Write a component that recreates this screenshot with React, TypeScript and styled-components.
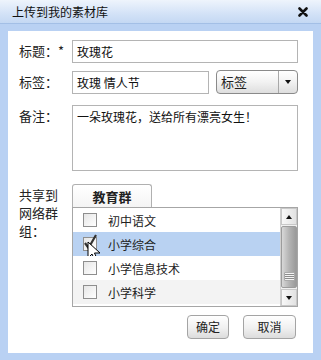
import { createGlobalStyle, styled } from 'styled-components';

const GlobalStyle = createGlobalStyle`
  html, body {
    margin: 0;
    padding: 0;
    background: #b9d1f3;
  }
  body {
    font-family: "Noto Sans CJK SC", "DejaVu Sans", sans-serif;
    color: #222;
  }
`;

const Dialog = styled.div`
  width: 321px;
  height: 360px;
  display: flex;
  flex-direction: column;
  background: #b9d1f3;
  box-sizing: border-box;
`;

const TitleBar = styled.div`
  height: 23px;
  flex: none;
  display: flex;
  align-items: center;
  justify-content: space-between;
  padding: 0 13px 0 12px;
  background: linear-gradient(#eef4fc, #d3e2f7 60%, #c4d8f3);
  border-bottom: 1px solid #a3bfe6;
  font-size: 12px;
  color: #111;
`;

const Panel = styled.div`
  flex: 1;
  margin: 7px 8px 7px 8px;
  background: #fff;
  padding: 9px 15px 0 11px;
  display: flex;
  flex-direction: column;
  position: relative;
`;

const Row = styled.div<{ $gap?: number }>`
  display: grid;
  grid-template-columns: 53px 1fr;
  margin-bottom: ${(p) => p.$gap ?? 8}px;
`;

const Label = styled.div`
  font-size: 13px;
  line-height: 18px;
  padding-top: 2px;
  color: #222;
`;

const Field = styled.div<{ $h?: number }>`
  height: ${(p) => p.$h ?? 23}px;
  box-sizing: border-box;
  border: 1px solid #b4b4b4;
  padding: 2px 4px;
  font-size: 12px;
  line-height: 17px;
  background: #fff;
  color: #111;
`;

const Inline = styled.div`
  display: flex;
  gap: 7px;
`;

const Grow = styled(Field)`
  flex: 1;
`;

const SelectBox = styled.div`
  width: 82px;
  height: 24px;
  box-sizing: border-box;
  margin-top: -1px;
  border: 1px solid #8a8a8a;
  border-radius: 4px;
  background: linear-gradient(#ffffff, #f2f2f2 50%, #dedede);
  display: flex;
  font-size: 13px;
  color: #222;
`;

const SelectText = styled.div`
  flex: 1;
  padding-left: 4px;
  line-height: 22px;
`;

const SelectArrow = styled.div`
  width: 18px;
  border-left: 1px solid #a8a8a8;
  display: flex;
  align-items: center;
  justify-content: center;
  &::after {
    content: '';
    border-left: 3px solid transparent;
    border-right: 3px solid transparent;
    border-top: 4px solid #111;
  }
`;

const Share = styled.div`
  display: flex;
  flex-direction: column;
`;

const Tab = styled.div`
  width: 80px;
  height: 23px;
  box-sizing: border-box;
  border: 1px solid #b0b0b0;
  border-bottom: none;
  border-radius: 3px 3px 0 0;
  background: linear-gradient(#ffffff, #f4f4f4);
  font-size: 13px;
  font-weight: bold;
  text-align: center;
  line-height: 23px;
  color: #222;
`;

const ListBox = styled.div`
  height: 100px;
  box-sizing: border-box;
  border: 1px solid #a6a6a6;
  display: flex;
  background: #fff;
`;

const Items = styled.div`
  flex: 1;
  display: flex;
  flex-direction: column;
`;

const Item = styled.div<{ $bg?: string }>`
  height: 24px;
  flex: none;
  display: flex;
  align-items: center;
  padding-left: 10px;
  gap: 11px;
  font-size: 12px;
  color: #222;
  background: ${(p) => p.$bg ?? '#fff'};
  position: relative;
`;

const Check = styled.div`
  width: 14px;
  height: 14px;
  box-sizing: border-box;
  border: 1px solid #8e8e8e;
  background: linear-gradient(135deg, #e6e6e6, #ffffff);
  position: relative;
`;

const CheckMark = styled.svg`
  position: absolute;
  left: -1px;
  top: -4px;
`;

const Cursor = styled.svg`
  position: absolute;
  left: 14px;
  top: 9px;
`;

const Scrollbar = styled.div`
  width: 16px;
  display: flex;
  flex-direction: column;
  border-left: 1px solid #d0d0d0;
  background: #f0f0f0;
`;

const ScrollBtn = styled.div<{ $down?: boolean }>`
  height: 17px;
  flex: none;
  background: linear-gradient(90deg, #f8f8f8, #e2e2e2);
  border: 1px solid #c8c8c8;
  box-sizing: border-box;
  display: flex;
  align-items: center;
  justify-content: center;
  &::after {
    content: '';
    border-left: 3px solid transparent;
    border-right: 3px solid transparent;
    ${(p) => (p.$down ? 'border-top: 4px solid #111;' : 'border-bottom: 4px solid #111;')}
  }
`;

const Thumb = styled.div`
  flex: 1;
  margin: 1px 0;
  background: linear-gradient(90deg, #d8d8d8, #b4b4b4 50%, #9a9a9a);
  border: 1px solid #9c9c9c;
  border-radius: 2px;
  display: flex;
  align-items: flex-end;
  justify-content: center;
  padding-bottom: 6px;
`;

const Grip = styled.div`
  width: 9px;
  height: 7px;
  background: repeating-linear-gradient(#f4f4f4 0 1px, #8c8c8c 1px 2px);
  border: 1px solid #aaa;
  border-radius: 1px;
`;

const Buttons = styled.div`
  display: flex;
  justify-content: flex-end;
  gap: 14px;
  margin-top: 8px;
  padding-right: 2px;
`;

const Button = styled.div<{ $w: number }>`
  width: ${(p) => p.$w}px;
  height: 24px;
  box-sizing: border-box;
  border: 1px solid #a4a4a4;
  border-radius: 4px;
  background: linear-gradient(#ffffff, #f0f0f0 55%, #dcdcdc);
  font-size: 12px;
  line-height: 22px;
  text-align: center;
  color: #222;
`;

const items = [
  { name: '初中语文', checked: false, bg: '#fff' },
  { name: '小学综合', checked: true, bg: '#b9d2f2' },
  { name: '小学信息技术', checked: false, bg: '#fff' },
  { name: '小学科学', checked: false, bg: '#f3f3f3' },
];

export default function App() {
  return (
    <>
      <GlobalStyle />
      <Dialog>
        <TitleBar>
          <span>上传到我的素材库</span>
          <svg width="10" height="10" viewBox="0 0 10 10">
            <path d="M1.5 1.5 L8.5 8.5 M8.5 1.5 L1.5 8.5" stroke="#111" strokeWidth="2.6" strokeLinecap="round" />
          </svg>
        </TitleBar>
        <Panel>
          <Row>
            <Label>标题：*</Label>
            <Field>玫瑰花</Field>
          </Row>
          <Row $gap={11}>
            <Label>标签：</Label>
            <Inline>
              <Grow>玫瑰 情人节</Grow>
              <SelectBox>
                <SelectText>标签</SelectText>
                <SelectArrow />
              </SelectBox>
            </Inline>
          </Row>
          <Row $gap={13}>
            <Label>备注：</Label>
            <Field $h={66}>一朵玫瑰花，送给所有漂亮女生！</Field>
          </Row>
          <Row $gap={0}>
            <Label>
              共享到
              <br />
              网络群
              <br />
              组：
            </Label>
            <Share>
              <Tab>教育群</Tab>
              <ListBox>
                <Items>
                  {items.map((it) => (
                    <Item key={it.name} $bg={it.bg}>
                      <Check>
                        {it.checked && (
                          <CheckMark width="15" height="17" viewBox="0 0 15 17">
                            <path d="M2 9 L5.5 14 L13 1" fill="none" stroke="#333" strokeWidth="2.2" />
                          </CheckMark>
                        )}
                      </Check>
                      {it.name}
                      {it.checked && (
                        <Cursor width="14" height="22" viewBox="0 0 14 22">
                          <path d="M1 1 L1 17 L5 13 L8 20 L10.5 19 L7.5 12 L13 12 Z" fill="#fff" stroke="#000" strokeWidth="1" />
                        </Cursor>
                      )}
                    </Item>
                  ))}
                </Items>
                <Scrollbar>
                  <ScrollBtn />
                  <Thumb>
                    <Grip />
                  </Thumb>
                  <ScrollBtn $down />
                </Scrollbar>
              </ListBox>
            </Share>
          </Row>
          <Buttons>
            <Button $w={42}>确定</Button>
            <Button $w={53}>取消</Button>
          </Buttons>
        </Panel>
      </Dialog>
    </>
  );
}
